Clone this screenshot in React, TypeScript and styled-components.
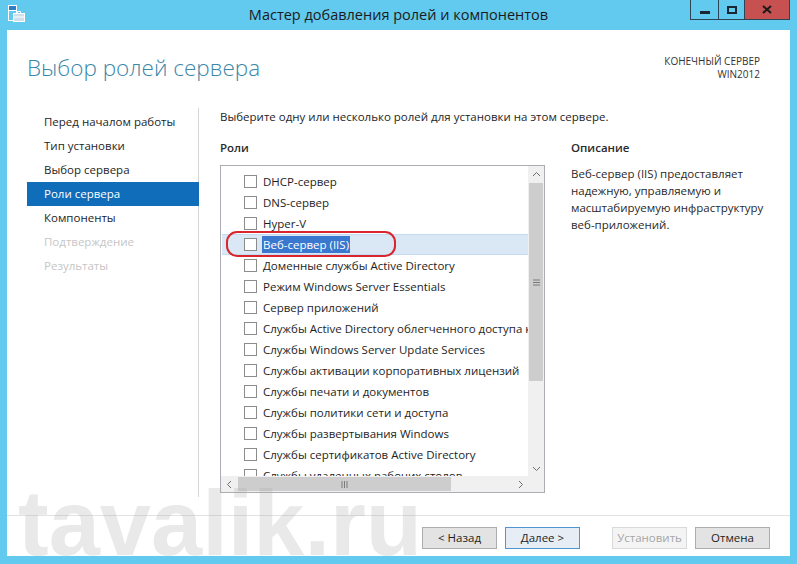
import styled, { createGlobalStyle } from 'styled-components'

const GlobalStyle = createGlobalStyle`
  html, body { margin: 0; padding: 0; }
  body {
    font-family: "Open Sans", "Noto Sans", sans-serif;
    font-size: 11.5px;
    color: #1e1e1e;
  }
  * { box-sizing: border-box; }
`;

const Window = styled.div`
  position: relative;
  width: 797px;
  height: 564px;
  background: #62c9ef;
  padding: 0 7px 8px;
  display: flex;
  flex-direction: column;
  overflow: hidden;
`;

const TitleBar = styled.div`
  height: 30px;
  flex: none;
  display: grid;
  grid-template-columns: 1fr auto 1fr;
  align-items: start;
`;

const AppIcon = styled.div`
  padding: 5px 0 0 1px;
  display: flex;
`;

const Title = styled.div`
  font-size: 14.5px;
  line-height: 30px;
  color: #1b1b1b;
`;

const Controls = styled.div`
  justify-self: end;
  display: flex;
  height: 20px;
`;

const CtrlButton = styled.div<{ $w: number; $close?: boolean }>`
  width: ${p => p.$w}px;
  height: 20px;
  border: 1px solid #2b4557;
  border-top: none;
  margin-left: -1px;
  background: ${p => (p.$close ? '#c75050' : 'transparent')};
  display: flex;
  align-items: center;
  justify-content: center;
`;

const Client = styled.div`
  flex: 1;
  background: #fff;
  display: flex;
  flex-direction: column;
`;

const Header = styled.div`
  height: 78px;
  flex: none;
  display: flex;
  justify-content: space-between;
  padding: 23px 30px 0 20px;
`;

const Heading = styled.h1`
  margin: 0;
  font-weight: 300;
  font-size: 22.5px;
  line-height: 30px;
  color: #3b87a8;
`;

const ServerInfo = styled.div`
  margin-top: 2px;
  text-align: right;
  font-size: 10px;
  line-height: 13px;
  color: #333;
`;

const Body = styled.div`
  flex: 1;
  display: flex;
  padding-left: 20px;
`;

const Nav = styled.div`
  width: 172px;
  flex: none;
  border-right: 1px solid #d6d6d6;
  padding-top: 2px;
  margin-bottom: 18px;
`;

type NavState = 'normal' | 'active' | 'disabled';

const NavItem = styled.div<{ $state: NavState }>`
  height: 24px;
  line-height: 24px;
  padding-left: 17px;
  margin-right: -1px;
  background: ${p => (p.$state === 'active' ? '#0f6dba' : 'transparent')};
  color: ${p => (p.$state === 'active' ? '#fff' : p.$state === 'disabled' ? '#c6c6c6' : '#1e1e1e')};
`;

const Content = styled.div`
  flex: 1;
  padding: 1px 0 0 21px;
  display: flex;
  flex-direction: column;
`;

const Intro = styled.div`
  line-height: 16px;
`;

const Columns = styled.div`
  display: flex;
  margin-top: 15px;
`;

const Column = styled.div<{ $w: number; $gap?: number }>`
  width: ${p => p.$w}px;
  margin-left: ${p => p.$gap || 0}px;
  flex: none;
`;

const Label = styled.div`
  line-height: 16px;
  margin-bottom: 9px;
  font-weight: 600;
  color: #2a2a2a;
`;

const ListBox = styled.div`
  width: 325px;
  height: 328px;
  border: 1px solid #abadb3;
  display: grid;
  grid-template-columns: 1fr 16px;
  grid-template-rows: 1fr 16px;
`;

const Viewport = styled.div`
  overflow: hidden;
  padding-top: 5px;
`;

const Row = styled.div<{ $selected?: boolean }>`
  position: relative;
  height: 21px;
  display: flex;
  align-items: center;
  padding-left: 22px;
  white-space: nowrap;
  margin-left: 1px;
  background: ${p => (p.$selected ? '#dae8f6' : 'transparent')};
  box-shadow: ${p => (p.$selected ? 'inset 0 1px 0 #c4dcf2, inset 0 -1px 0 #c4dcf2' : 'none')};
`;

const Check = styled.span`
  width: 13px;
  height: 13px;
  flex: none;
  border: 1px solid #8c8c8c;
  background: #fff;
  margin-right: 6px;
`;

const Marked = styled.span`
  background: #3a78cf;
  color: #fff;
  padding: 0 1px;
  margin-left: -1px;
  line-height: 17px;
`;

const Oval = styled.div`
  position: absolute;
  left: 4px;
  top: -3px;
  width: 170px;
  height: 26px;
  border: 2px solid #d9252c;
  border-radius: 11px;
  pointer-events: none;
`;

const VScroll = styled.div`
  background: #f0f0f0;
  display: flex;
  flex-direction: column;
`;

const HScroll = styled.div`
  background: #f0f0f0;
  display: flex;
`;

const Corner = styled.div`
  background: #f0f0f0;
`;

const ArrowBtn = styled.div`
  width: 16px;
  height: 16px;
  flex: none;
  display: flex;
  align-items: center;
  justify-content: center;
`;

const Thumb = styled.div<{ $horizontal?: boolean }>`
  background: #cdcdcd;
  display: flex;
  align-items: center;
  justify-content: center;
  ${p =>
    p.$horizontal
      ? 'width: 213px; margin: 1px 0 1px 1px;'
      : 'height: 198px; margin: 1px 1px 0;'}
`;

const Spacer = styled.div`
  flex: 1;
`;

const DescText = styled.div`
  line-height: 17px;
  color: #2a2a2a;
`;

const Footer = styled.div`
  height: 41px;
  flex: none;
  border-top: 1px solid #e2e2e2;
  display: flex;
  justify-content: flex-end;
  padding: 11px 20px 0;
  gap: 8px;
`;

type BtnKind = 'normal' | 'default' | 'disabled';

const Button = styled.div<{ $kind?: BtnKind; $gap?: number }>`
  width: 75px;
  height: 22px;
  line-height: 20px;
  text-align: center;
  margin-left: ${p => p.$gap || 0}px;
  border: 1px solid ${p => (p.$kind === 'default' ? '#4f95cf' : p.$kind === 'disabled' ? '#d9d9d9' : '#adadad')};
  background: ${p => (p.$kind === 'default' ? '#e6edf4' : p.$kind === 'disabled' ? '#f4f4f4' : '#e3e3e3')};
  color: ${p => (p.$kind === 'disabled' ? '#a6a6a6' : '#1e1e1e')};
`;

const Watermark = styled.div`
  position: absolute;
  left: 18px;
  top: 477px;
  font-family: "Liberation Sans", Arial, sans-serif;
  font-weight: 700;
  font-size: 92px;
  line-height: 92px;
  color: rgba(170, 170, 170, 0.26);
  pointer-events: none;
`;

const navItems: { label: string; state: NavState }[] = [
  { label: 'Перед началом работы', state: 'normal' },
  { label: 'Тип установки', state: 'normal' },
  { label: 'Выбор сервера', state: 'normal' },
  { label: 'Роли сервера', state: 'active' },
  { label: 'Компоненты', state: 'normal' },
  { label: 'Подтверждение', state: 'disabled' },
  { label: 'Результаты', state: 'disabled' },
];

const roles = [
  'DHCP-сервер',
  'DNS-сервер',
  'Hyper-V',
  'Веб-сервер (IIS)',
  'Доменные службы Active Directory',
  'Режим Windows Server Essentials',
  'Сервер приложений',
  'Службы Active Directory облегченного доступа к каталогам',
  'Службы Windows Server Update Services',
  'Службы активации корпоративных лицензий',
  'Службы печати и документов',
  'Службы политики сети и доступа',
  'Службы развертывания Windows',
  'Службы сертификатов Active Directory',
  'Службы удаленных рабочих столов',
];

const Chevron = ({ dir }: { dir: 'up' | 'down' | 'left' | 'right' }) => {
  const pts = {
    up: '1,5 4.5,1.5 8,5',
    down: '1,2 4.5,5.5 8,2',
    left: '5,1 1.5,4.5 5,8',
    right: '2,1 5.5,4.5 2,8',
  }[dir];
  const w = dir === 'up' || dir === 'down' ? 9 : 7;
  const h = dir === 'up' || dir === 'down' ? 7 : 9;
  return (
    <svg width={w} height={h} viewBox={`0 0 ${w} ${h}`}>
      <polyline points={pts} fill="none" stroke="#6d6d6d" strokeWidth="1" />
    </svg>
  );
};

function App() {
  return (
    <>
      <GlobalStyle />
      <Window>
        <TitleBar>
          <AppIcon>
            <svg width="17" height="17" viewBox="0 0 17 17">
              <rect x="0.5" y="0.5" width="8" height="15" fill="none" stroke="#fff" />
              <rect x="1" y="1" width="7" height="4" fill="#2f7fc4" />
              <line x1="0.5" y1="5.5" x2="8.5" y2="5.5" stroke="#fff" />
              <rect x="5.5" y="8.5" width="11" height="8" fill="#cfdfeb" stroke="#fff" />
              <path d="M9.5 8.5V6.5h3v2" fill="none" stroke="#fff" />
              <line x1="5.5" y1="12" x2="16.5" y2="12" stroke="#fff" />
            </svg>
          </AppIcon>
          <Title>Мастер добавления ролей и компонентов</Title>
          <Controls>
            <CtrlButton $w={29}>
              <svg width="10" height="8" viewBox="0 0 10 8">
                <rect x="0" y="5" width="10" height="3" fill="#1a2733" />
              </svg>
            </CtrlButton>
            <CtrlButton $w={27}>
              <svg width="10" height="8" viewBox="0 0 10 8">
                <rect x="1" y="1" width="8" height="6" fill="none" stroke="#1a2733" strokeWidth="2" />
              </svg>
            </CtrlButton>
            <CtrlButton $w={46} $close>
              <svg width="10" height="9" viewBox="0 0 10 9">
                <path d="M1 1l8 7M9 1L1 8" stroke="#1a1a1a" strokeWidth="2" />
              </svg>
            </CtrlButton>
          </Controls>
        </TitleBar>
        <Client>
          <Header>
            <Heading>Выбор ролей сервера</Heading>
            <ServerInfo>
              КОНЕЧНЫЙ СЕРВЕР
              <br />
              WIN2012
            </ServerInfo>
          </Header>
          <Body>
            <Nav>
              {navItems.map(item => (
                <NavItem key={item.label} $state={item.state}>
                  {item.label}
                </NavItem>
              ))}
            </Nav>
            <Content>
              <Intro>Выберите одну или несколько ролей для установки на этом сервере.</Intro>
              <Columns>
                <Column $w={325}>
                  <Label>Роли</Label>
                  <ListBox>
                    <Viewport>
                      {roles.map((r, i) => (
                        <Row key={r} $selected={i === 3}>
                          <Check />
                          {i === 3 ? <Marked>{r}</Marked> : r}
                          {i === 3 && <Oval />}
                        </Row>
                      ))}
                    </Viewport>
                    <VScroll>
                      <ArrowBtn>
                        <Chevron dir="up" />
                      </ArrowBtn>
                      <Thumb>
                        <svg width="7" height="7" viewBox="0 0 7 7">
                          <path d="M0 1h7M0 3.5h7M0 6h7" stroke="#7a7a7a" strokeWidth="1" />
                        </svg>
                      </Thumb>
                      <Spacer />
                      <ArrowBtn>
                        <Chevron dir="down" />
                      </ArrowBtn>
                    </VScroll>
                    <HScroll>
                      <ArrowBtn>
                        <Chevron dir="left" />
                      </ArrowBtn>
                      <Thumb $horizontal>
                        <svg width="7" height="7" viewBox="0 0 7 7">
                          <path d="M1 0v7M3.5 0v7M6 0v7" stroke="#7a7a7a" strokeWidth="1" />
                        </svg>
                      </Thumb>
                      <Spacer />
                      <ArrowBtn>
                        <Chevron dir="right" />
                      </ArrowBtn>
                    </HScroll>
                    <Corner />
                  </ListBox>
                </Column>
                <Column $w={200} $gap={26}>
                  <Label>Описание</Label>
                  <DescText>
                    Веб-сервер (IIS) предоставляет
                    <br />
                    надежную, управляемую и
                    <br />
                    масштабируемую инфраструктуру
                    <br />
                    веб-приложений.
                  </DescText>
                </Column>
              </Columns>
            </Content>
          </Body>
          <Footer>
            <Button>&lt; Назад</Button>
            <Button $kind="default">Далее &gt;</Button>
            <Button $kind="disabled" $gap={24}>
              Установить
            </Button>
            <Button>Отмена</Button>
          </Footer>
        </Client>
        <Watermark>tavalik.ru</Watermark>
      </Window>
    </>
  );
}

export default App
